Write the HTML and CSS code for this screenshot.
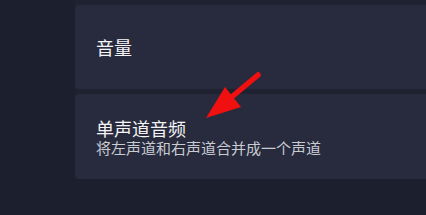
FILE: index.html
```html
<!DOCTYPE html>
<html lang="zh-CN">
<head>
<meta charset="utf-8">
<link rel="stylesheet" href="styles.css">
</head>
<body>
<div class="page">
  <div class="side"></div>
  <div class="list">
    <div class="card">
      <div class="title">音量</div>
    </div>
    <div class="card">
      <div class="texts">
        <div class="title">单声道音频</div>
        <div class="sub">将左声道和右声道合并成一个声道</div>
      </div>
    </div>
  </div>
  <svg class="arrow" width="426" height="215" viewBox="0 0 426 215">
    <line x1="258" y1="75" x2="228" y2="100" stroke="#f01010" stroke-width="5.5" stroke-linecap="round"/>
    <polygon points="206,118 225,87 241,107" fill="#f01010"/>
  </svg>
</div>
</body>
</html>
```
FILE: styles.css
```css
html, body {
  margin: 0;
  padding: 0;
  background: #1c1f2d;
}
.page {
  position: relative;
  width: 426px;
  height: 215px;
  overflow: hidden;
  display: flex;
  align-items: flex-start;
  font-family: "Noto Sans CJK SC", "Noto Sans", sans-serif;
}
.side {
  width: 75px;
  flex: none;
}
.list {
  flex: 1;
  display: flex;
  flex-direction: column;
  gap: 5px;
  padding-top: 5px;
  margin-right: -10px;
  background: #1f2231;
}
.card {
  height: 84px;
  background: #282b3d;
  border-radius: 4px;
  display: flex;
  align-items: center;
  padding-left: 21px;
  box-sizing: border-box;
}
.card + .card {
  height: 85px;
}
.title {
  color: #f4f4f6;
  font-size: 18px;
  line-height: 20px;
}
.texts .title {
  margin-top: 1px;
}
.sub {
  color: #c9cbd3;
  font-size: 15px;
  line-height: 19px;
}
.arrow {
  position: absolute;
  left: 0;
  top: 0;
}
```
